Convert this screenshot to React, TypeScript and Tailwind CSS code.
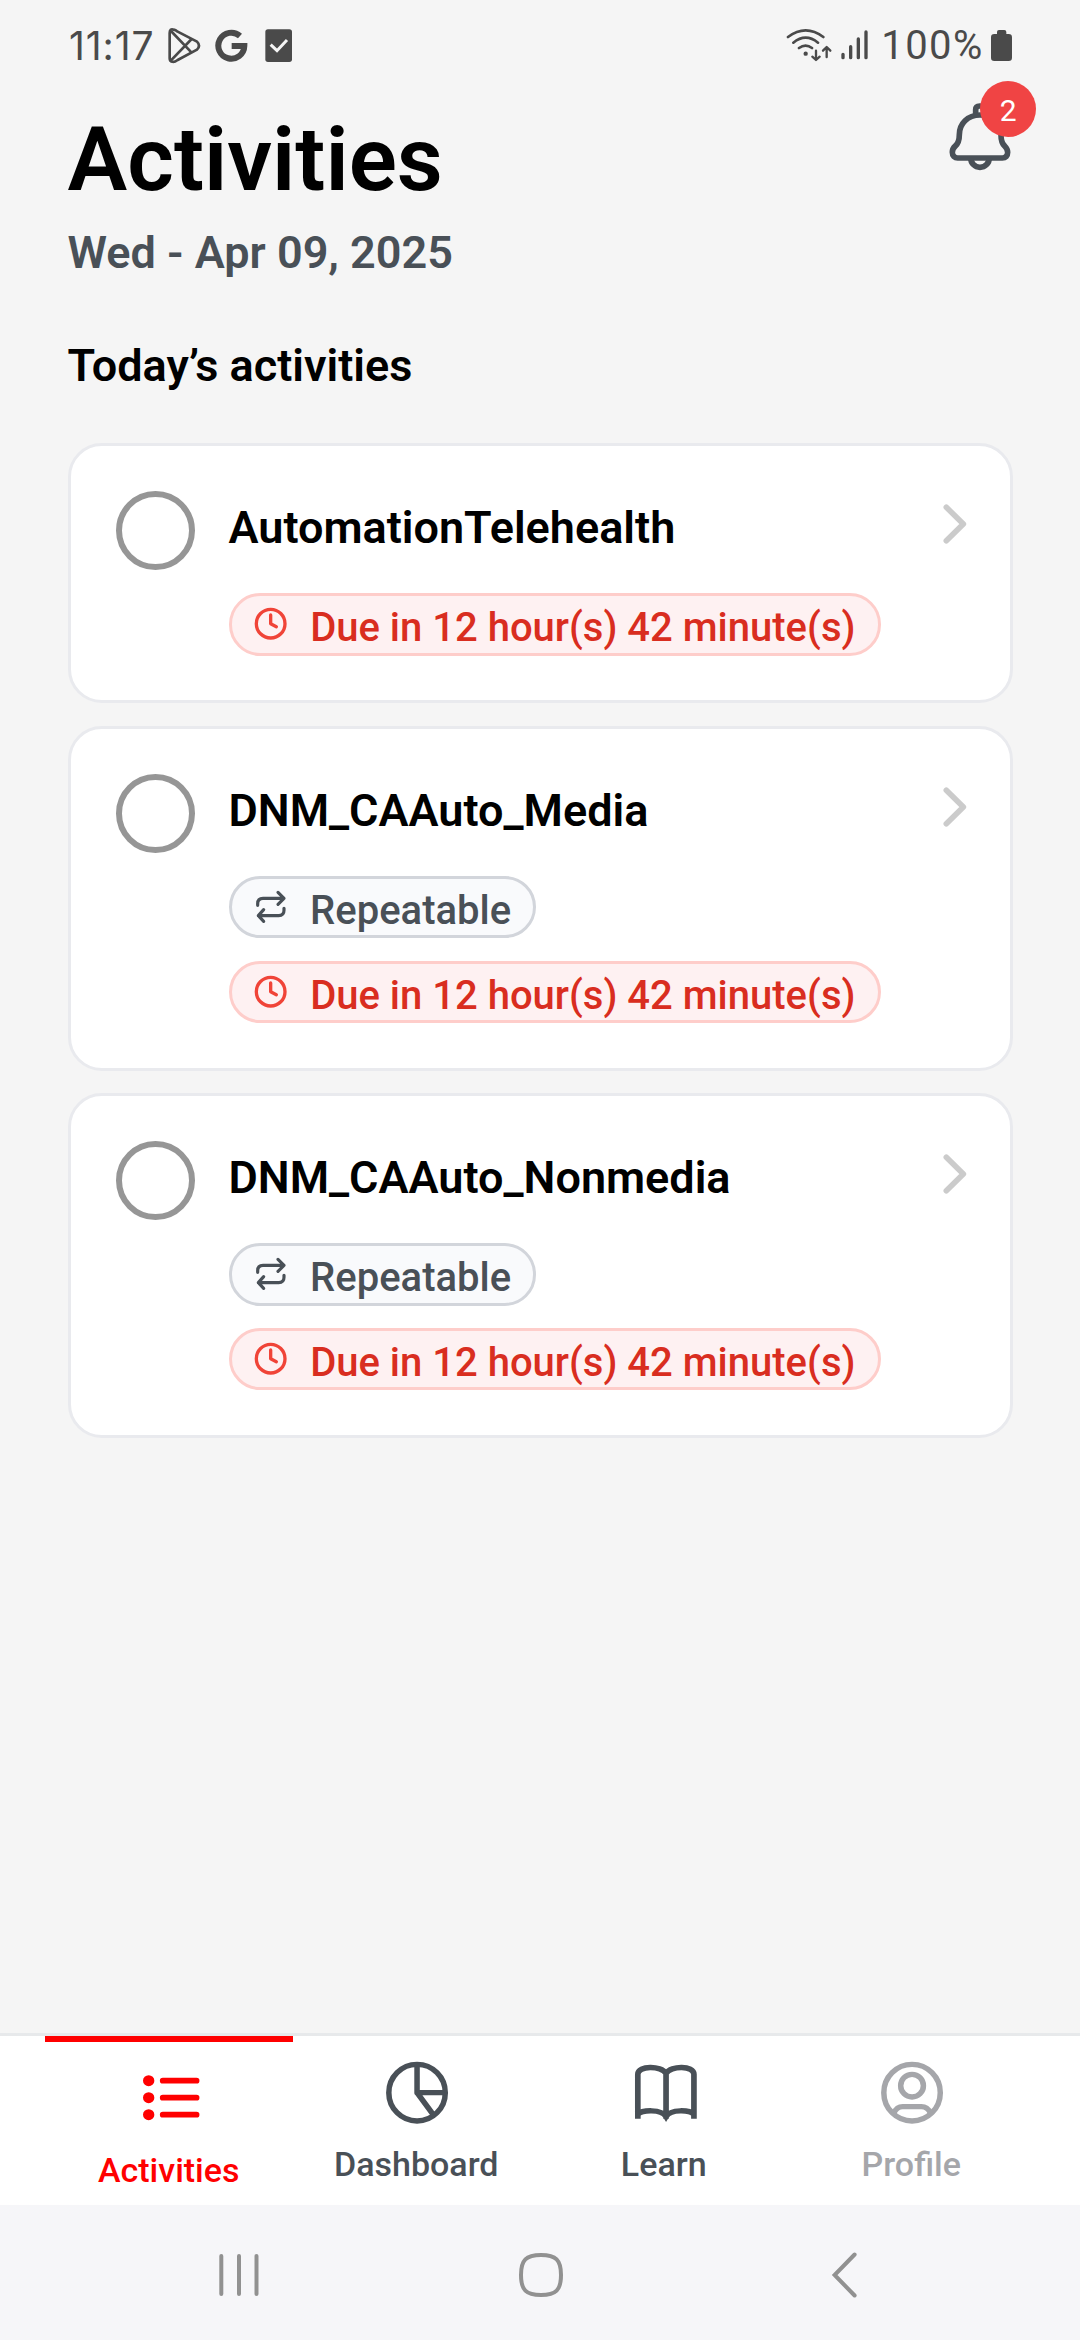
import type { ReactNode } from "react";

const activities = [
  { title: "AutomationTelehealth", repeatable: false },
  { title: "DNM_CAAuto_Media", repeatable: true },
  { title: "DNM_CAAuto_Nonmedia", repeatable: true },
];

function StatusBar() {
  return (
    <div className="flex h-[91px] items-start pl-[69px] pr-[67px] pt-[26.7px] text-[#4a4a4a]">
      <span className="w-[98px] font-['Inter'] text-[39px] leading-[37px] font-normal tracking-[0.9px]">11:17</span>
      <svg className="h-[37.33px] w-[35.33px]" viewBox="380 80 106 112" fill="none" stroke="currentColor" strokeWidth="8" strokeLinejoin="round">
        <path d="M388 98Q388 84 400 88Q406 89 412 94L470 124Q482 136 470 148L412 179Q401 187 395 184Q388 183 388 174Z" />
        <path d="M392 92L454 157M392 180L454 116" />
      </svg>
      <svg className="ml-[12.7px] h-[37.33px] w-[33.33px]" viewBox="524 80 100 112" fill="none" stroke="currentColor" strokeWidth="18">
        <path d="M599 107A39 39 0 1 0 612 137H574" />
      </svg>
      <svg className="ml-[16.7px] h-[37.33px] w-[28px]" viewBox="674 80 84 112">
        <rect x="675" y="87" width="80" height="98" rx="8" fill="currentColor" />
        <path d="M691 133L710 151L740 119" fill="none" stroke="#f5f5f5" strokeWidth="9" />
      </svg>
      <div className="flex-1" />
      <svg className="h-[37.33px] w-[46px]" viewBox="78 80 138 112" fill="none" stroke="currentColor" strokeWidth="8" strokeLinecap="round">
        <path d="M84 110Q137 70 190 110M100 127Q137 97 174 127M117 143Q137 129 156 143" />
        <circle cx="137" cy="160" r="6.5" fill="currentColor" stroke="none" />
        <path d="M168 151V178M157 169L168 179L179 169M200 170V141M189 151L200 140L211 151" strokeWidth="7" strokeLinejoin="round" />
      </svg>
      <svg className="ml-2 h-[37.33px] w-[29.33px]" viewBox="240 80 88 112" stroke="currentColor" strokeWidth="10" strokeLinecap="round">
        <path d="M249 162V172M272 139V172M295 116V172M318 95V172" />
      </svg>
      <span className="ml-[12px] w-[109px] whitespace-nowrap text-[40px] leading-[38px] font-normal tracking-[1.4px]">100%</span>
      <svg className="h-[37.33px] w-[22.67px]" viewBox="690 80 68 112" fill="currentColor">
        <path d="M711 101V95Q711 89 717 89H733Q739 89 739 95V101H746Q756 101 756 111V172Q756 182 746 182H703Q693 182 693 172V111Q693 101 703 101Z" />
      </svg>
    </div>
  );
}

function Bell() {
  return (
    <div className="relative mt-[9px] mr-[66.6px] h-[73.33px] w-[66.67px]">
      <svg className="h-full w-full" viewBox="560 300 200 220" fill="none" stroke="#495057" strokeWidth="17" strokeLinejoin="round">
        <path d="M646 342V329Q646 318 658 318T672 329V342" />
        <path d="M659 345C622 345 597 371 597 404C597 424 593 431 585 438C577 445 576 451 576 457C576 468 583 474 592 474H726C736 474 742 468 742 457C742 451 740 445 733 438C725 431 722 424 722 404C722 371 696 345 659 345Z" />
        <path d="M631 474A28 28 0 0 0 687 474" />
      </svg>
      <div className="absolute -top-[19px] left-[33.5px] flex size-14 items-center justify-center rounded-full bg-[#f04444] pt-[3px] text-[30px] text-white">
        2
      </div>
    </div>
  );
}

function Clock() {
  return (
    <svg className="mt-[10px] ml-[21.3px] size-[35.33px]" viewBox="610 558 106 106" fill="none" stroke="#f04438" strokeWidth="10" strokeLinecap="round" strokeLinejoin="round">
      <circle cx="663" cy="611" r="43" />
      <path d="M663 585V611L680 620" />
    </svg>
  );
}

function Repeat() {
  return (
    <svg className="mt-[11px] mr-[1.6px] ml-[23px] h-[34px] w-[32px]" viewBox="615 570 96 102" fill="none" stroke="#495057" strokeWidth="9.5" strokeLinecap="round" strokeLinejoin="round">
      <path d="M623 616V611Q623 595 639 595H702M684 577L702 595L684 613" />
      <path d="M702 625V631Q702 647 686 647H625M641 629L625 647L641 664" />
    </svg>
  );
}

function Pill({ icon, tone, children }: { icon: ReactNode; tone: "red" | "gray"; children: ReactNode }) {
  const colors =
    tone === "red"
      ? "border-[#fecdca] bg-[#fef1f2] pr-[22.5px] text-[#d92d20]"
      : "border-[#d2d5db] bg-[#f9fafc] pr-[21.5px] text-[#495057]";
  return (
    <div className={`flex h-[62.4px] w-fit items-start rounded-[31.2px] border-[3px] text-[40px] leading-[56px] font-medium ${colors}`}>
      {icon}
      <span className="mt-[4px] ml-[22px] whitespace-nowrap">{children}</span>
    </div>
  );
}

function Card({ title, repeatable }: { title: string; repeatable: boolean }) {
  return (
    <div className="flex items-start rounded-[33.75px] border-[3px] border-[#e9eaee] bg-white pb-[44.4px]">
      <div className="mt-[45px] ml-[45px] size-[79px] shrink-0 rounded-full border-[6px] border-[#969696]" />
      <div className="ml-[34px] flex-1">
        <div className="mt-[54.9px] h-[54px] text-[45px] leading-[54px] font-semibold text-black">{title}</div>
        <div className="mt-[38.3px] flex flex-col gap-[22.5px]">
          {repeatable && (
            <Pill tone="gray" icon={<Repeat />}>
              Repeatable
            </Pill>
          )}
          <Pill tone="red" icon={<Clock />}>
            Due in 12 hour(s) 42 minute(s)
          </Pill>
        </div>
      </div>
      <svg className="mt-[57.3px] mr-[41.2px] h-[43.33px] w-[26.67px]" viewBox="1205 250 80 130" fill="none" stroke="#cbcbcb" strokeWidth="17" strokeLinecap="round" strokeLinejoin="round">
        <path d="M1218 263L1269 313L1218 363" />
      </svg>
    </div>
  );
}

function Tab({ label, active, muted, children }: { label: string; active?: boolean; muted?: boolean; children: ReactNode }) {
  const tone = active ? "border-[#ff0000] text-[#ff0000]" : muted ? "border-transparent text-[#a5a6aa]" : "border-transparent text-[#495057]";
  return (
    <div className={`flex h-full w-[247.5px] flex-col items-center ${active ? "border-t-[6px]" : "border-t-0"} ${tone}`}>
      {children}
      <div className="mt-[18px] text-[34px] leading-10 font-medium">{label}</div>
    </div>
  );
}

function TabBar() {
  return (
    <div className="flex h-[172px] justify-center border-t-[3px] border-[#e7e9eb] bg-white">
      <Tab label="Activities" active>
        <svg className="mt-6 ml-1 h-[66px] w-[66.1px]" viewBox="400 168 192 198" preserveAspectRatio="none" fill="currentColor">
          <circle cx="431" cy="212" r="16.5" />
          <circle cx="431" cy="263" r="16.5" />
          <circle cx="431" cy="314" r="16.5" />
          <path d="M472 212H570M472 263H570M472 314H570" stroke="currentColor" strokeWidth="17" strokeLinecap="round" />
        </svg>
      </Tab>
      <Tab label="Dashboard">
        <svg className="mt-6 ml-[2px] h-[66px] w-[66.1px]" viewBox="1116 150 192 198" preserveAspectRatio="none" fill="none" stroke="currentColor" strokeWidth="16">
          <ellipse cx="1212" cy="248" rx="82" ry="85" />
          <path d="M1212 165V248H1293M1212 248L1259 314" strokeLinejoin="round" />
        </svg>
      </Tab>
      <Tab label="Learn">
        <svg className="mt-6 ml-1 h-[66px] w-[66.1px]" viewBox="270 150 192 198" preserveAspectRatio="none" fill="none" stroke="currentColor" strokeWidth="16.5">
          <path d="M284 326V193C284 166 352 166 366 190C380 166 447 166 447 193V326M366 190V326M284 313C296 300 352 296 366 320C380 296 435 300 447 313" />
        </svg>
      </Tab>
      <Tab label="Profile" muted>
        <svg className="mt-6 ml-[2px] h-[66px] w-[66.1px]" viewBox="985 150 192 198" preserveAspectRatio="none" fill="none" stroke="currentColor" strokeWidth="16">
          <ellipse cx="1081" cy="248" rx="82" ry="85" />
          <ellipse cx="1081" cy="227" rx="33" ry="34" />
          <path d="M1028 310Q1036 290 1054 290H1108Q1126 290 1135 310" />
        </svg>
      </Tab>
    </div>
  );
}

function SystemNav() {
  return (
    <div className="flex h-[135px] items-center bg-[#f6f6f9] pt-[5px] pl-[216px] text-[#919191]">
      <svg className="h-[50px] w-[46px]" viewBox="0 0 46 50" stroke="currentColor" strokeWidth="4" strokeLinecap="round">
        <path d="M5.3 6V44M23 6V44M40.5 6V44" />
      </svg>
      <svg className="ml-[254px] h-[50px] w-[50px]" viewBox="0 0 50 50" fill="none" stroke="currentColor" strokeWidth="4">
        <path d="M25 5C40 5 45 10 45 25S40 45 25 45S5 40 5 25S10 5 25 5Z" />
      </svg>
      <svg className="ml-[262px] h-[50px] w-[34px]" viewBox="0 0 34 50" fill="none" stroke="currentColor" strokeWidth="4" strokeLinecap="round">
        <path d="M26.6 4.5L6.6 25L26.6 45.5" />
      </svg>
    </div>
  );
}

export default function App() {
  return (
    <div className="flex h-[2340px] w-[1080px] flex-col bg-[#f5f5f5] font-['Roboto',sans-serif]">
      <StatusBar />
      <header className="flex h-[135.4px] items-start justify-between pl-[67.5px]">
        <h1 className="mt-4 text-[89.5px] leading-[106px] font-semibold text-black">Activities</h1>
        <Bell />
      </header>
      <main className="flex-1 px-[67.5px]">
        <p className="text-[45px] leading-[54px] font-semibold text-[#495057]">Wed - Apr 09, 2025</p>
        <h2 className="mt-[58.2px] text-[45px] leading-[54px] font-semibold text-black">Today’s activities</h2>
        <div className="mt-[50.6px] flex flex-col gap-[22.5px]">
          {activities.map((a) => (
            <Card key={a.title} {...a} />
          ))}
        </div>
      </main>
      <TabBar />
      <SystemNav />
    </div>
  );
}
